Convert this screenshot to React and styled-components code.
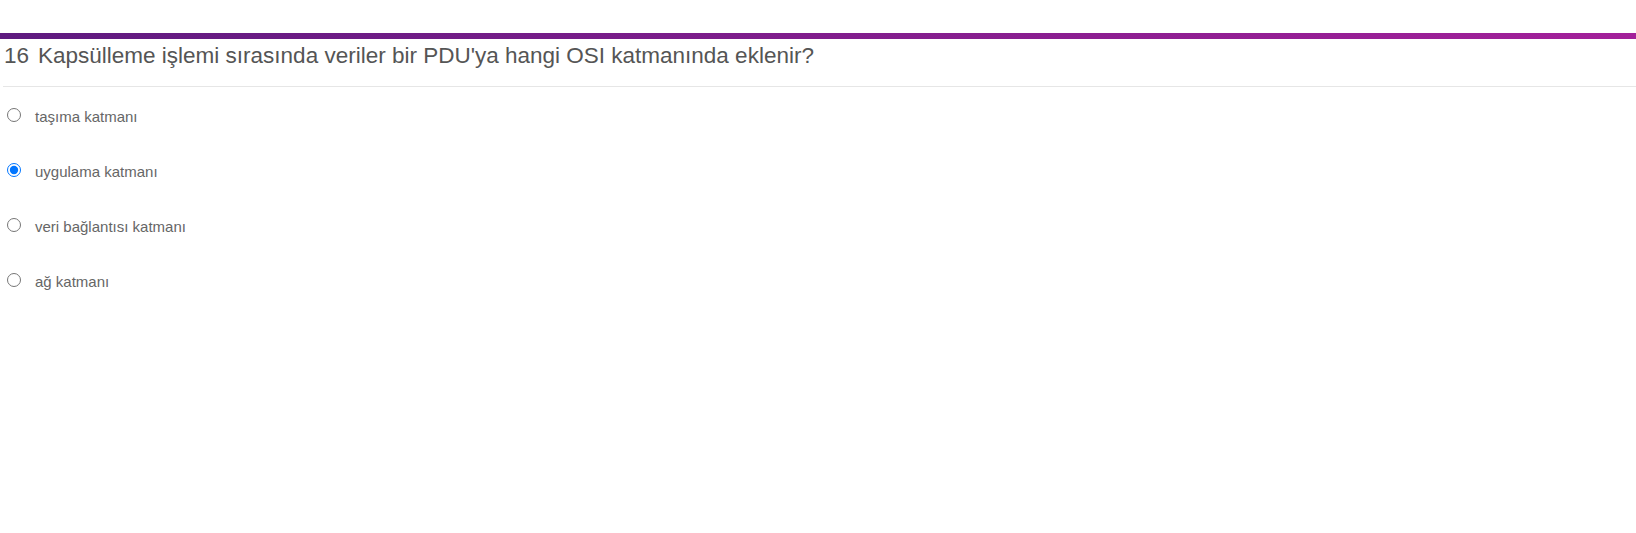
import React from "react";
import styled, { createGlobalStyle } from "styled-components";

const Global = createGlobalStyle`
  html, body { margin: 0; padding: 0; background: #fff; }
  body { font-family: "Liberation Sans", Arial, sans-serif; }
`;

const Page = styled.div`
  padding-top: 33px;
`;

const AccentBar = styled.div`
  height: 6px;
  background: linear-gradient(to right, #5e1a7f, #a3209a);
`;

const QuestionHeader = styled.div`
  display: flex;
  align-items: baseline;
  padding: 4px 0 18px 4px;
  font-size: 22.5px;
  line-height: 25px;
  color: #555;
`;

const Number = styled.span`
  margin-right: 9px;
`;

const Divider = styled.hr`
  margin: 0 0 0 3px;
  border: 0;
  border-top: 1px solid #e6e6e6;
  height: 0;
`;

const Options = styled.div`
  display: flex;
  flex-direction: column;
  padding: 18px 0 0 1px;
  gap: 35px;
`;

const Option = styled.label`
  display: block;
  font-size: 15px;
  line-height: 17px;
  color: #666;
  cursor: pointer;
`;

const Radio = styled.input.attrs({ type: "radio" })`
  width: 14px;
  height: 14px;
  margin: 3px 3px 0 6px;
  vertical-align: baseline;
`;

const OptionText = styled.span`
  margin-left: 11px;
`;

const options = [
  "taşıma katmanı",
  "uygulama katmanı",
  "veri bağlantısı katmanı",
  "ağ katmanı",
];

export default function App() {
  return (
    <>
      <Global />
      <Page>
        <AccentBar />
        <QuestionHeader>
          <Number>16</Number>
          <span>Kapsülleme işlemi sırasında veriler bir PDU'ya hangi OSI katmanında eklenir?</span>
        </QuestionHeader>
        <Divider />
        <Options>
          {options.map((o, i) => (
            <Option key={o}>
              <Radio name="q16" defaultChecked={i === 1} />
              <OptionText>{o}</OptionText>
            </Option>
          ))}
        </Options>
      </Page>
    </>
  );
}
